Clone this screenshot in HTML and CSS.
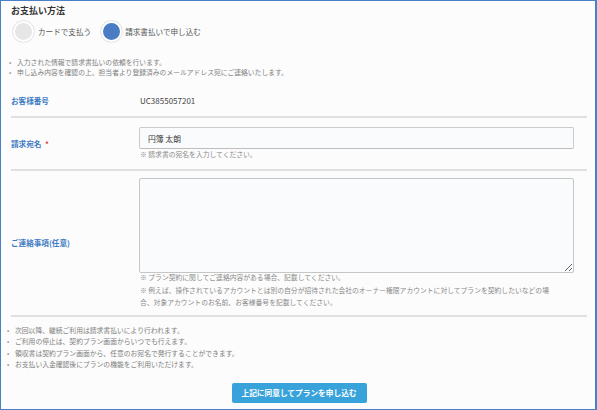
FILE: index.html
```html
<!DOCTYPE html>
<html lang="ja">
<head>
<meta charset="utf-8">
<title>お支払い方法</title>
<link rel="stylesheet" href="styles.css">
</head>
<body>
<div class="frame">
  <h2 class="title">お支払い方法</h2>
  <div class="methods">
    <label class="method"><span class="dot"></span><span>カードで支払う</span></label>
    <label class="method"><span class="dot dot-on"></span><span>請求書払いで申し込む</span></label>
  </div>
  <ul class="notes notes-top">
    <li>入力された情報で請求書払いの依頼を行います。</li>
    <li>申し込み内容を確認の上、担当者より登録済みのメールアドレス宛にご連絡いたします。</li>
  </ul>
  <div class="form">
    <div class="row row-id">
      <div class="label">お客様番号</div>
      <div class="field value">UC3855057201</div>
    </div>
    <div class="row row-name">
      <div class="label">請求宛名 <span class="req">*</span></div>
      <div class="field">
        <input class="input" type="text" value="円簿 太朗">
        <p class="help">※ 請求書の宛名を入力してください。</p>
      </div>
    </div>
    <div class="row row-memo">
      <div class="label">ご連絡事項(任意)</div>
      <div class="field">
        <textarea class="textarea"></textarea>
        <p class="help help-multi">※ プラン契約に関してご連絡内容がある場合、記載してください。<br>※ 例えば、操作されているアカウントとは別の自分が招待された会社のオーナー権限アカウントに対してプランを契約したいなどの場合、対象アカウントのお名前、お客様番号を記載してください。</p>
      </div>
    </div>
  </div>
  <ul class="notes notes-bottom">
    <li>次回以降、継続ご利用は請求書払いにより行われます。</li>
    <li>ご利用の停止は、契約プラン画面からいつでも行えます。</li>
    <li>領収書は契約プラン画面から、任意のお宛名で発行することができます。</li>
    <li>お支払い入金確認後にプランの機能をご利用いただけます。</li>
  </ul>
  <div class="actions">
    <button class="submit" type="button">上記に同意してプランを申し込む</button>
  </div>
</div>
</body>
</html>
```

FILE: styles.css
```css
html, body {
  margin: 0;
  padding: 0;
  background: #fcfcfc;
}
body {
  font-family: "Noto Sans CJK JP", "Noto Sans", sans-serif;
  color: #444;
}
.frame {
  box-sizing: border-box;
  width: 597px;
  height: 410px;
  border-style: solid;
  border-color: #4a80c8;
  border-width: 1px 2px 1px 1px;
  padding: 3px 8px 0 10px;
  background: #fcfcfc;
  overflow: hidden;
}
.title {
  margin: 0;
  font-size: 9px;
  line-height: 13px;
  font-weight: bold;
  color: #333;
}
.methods {
  display: flex;
  align-items: center;
  margin-top: 4px;
  height: 21px;
  margin-left: 2px;
}
.method {
  display: flex;
  align-items: center;
  gap: 4px;
  font-size: 7.6px;
  color: #555;
  margin-right: 10px;
}
.method + .method .dot { margin-right: -1px; }
.dot {
  box-sizing: border-box;
  width: 21px;
  height: 21px;
  border-radius: 50%;
  background: #e6e6e6;
  border: 2px solid #fff;
  box-shadow: 0 0 1px 0.5px #d6d6d6;
}
.dot-on {
  background: #4a7cc4;
}
.notes {
  list-style: none;
  margin: 0;
  padding: 0;
  font-size: 6.8px;
  color: #808080;
}
.notes li {
  display: flex;
}
.notes li::before {
  content: "•";
  width: 8px;
  margin-left: -4px;
  flex: none;
  color: #888;
}
.notes-top {
  margin-top: 15px;
  line-height: 10px;
}
.notes-top li::before { margin-left: -2px; width: 10px; margin-right: -2px; }
.form {
  margin-top: 8px;
}
.row {
  display: grid;
  grid-template-columns: 128px 1fr;
  align-items: center;
  border-bottom: 2px solid #e0e0e0;
}
.label {
  font-size: 7.6px;
  font-weight: bold;
  color: #3f7bc5;
}
.req {
  color: #e04848;
  margin-left: 2px;
}
.row-id {
  height: 31px;
}
.value {
  font-size: 8px;
  color: #444;
  padding-left: 1px;
}
.row-name .field {
  padding: 9px 13px 9px 0;
}
.input {
  display: block;
  box-sizing: border-box;
  width: 100%;
  height: 22px;
  margin: 0;
  padding: 0 8px;
  border: 1px solid #cbcbcb;
  border-bottom-color: #bdbdbd;
  border-radius: 2px;
  background: #fafbfd;
  font-family: inherit;
  font-size: 7.8px;
  color: #333;
  outline: none;
}
.help {
  margin: 0;
  font-size: 6.8px;
  line-height: 11px;
  color: #8a8a8a;
  padding-left: 1px;
}
.row-memo .field {
  padding: 7px 13px 6px 0;
}
.textarea {
  display: block;
  box-sizing: border-box;
  width: 100%;
  height: 95px;
  margin: 0;
  border: 1px solid #c6c6c6;
  border-radius: 2px;
  background: #fafbfd;
  resize: vertical;
  font-family: inherit;
  font-size: 8px;
  outline: none;
}
.help-multi {
  line-height: 12.5px;
  margin-top: -2px;
  max-width: 420px;
}
.notes-bottom {
  margin-top: 8px;
  line-height: 11.6px;
}
.notes-bottom li::before { margin-left: -4px; width: 11px; margin-right: -3px; }
.actions {
  display: flex;
  justify-content: center;
  margin-top: 12px;
}
.submit {
  width: 135px;
  height: 20px;
  margin: 0;
  padding: 0;
  border: none;
  border-radius: 2px;
  background: #38a3db;
  color: #fff;
  font-family: inherit;
  font-size: 7.7px;
  font-weight: bold;
  cursor: pointer;
}
```
